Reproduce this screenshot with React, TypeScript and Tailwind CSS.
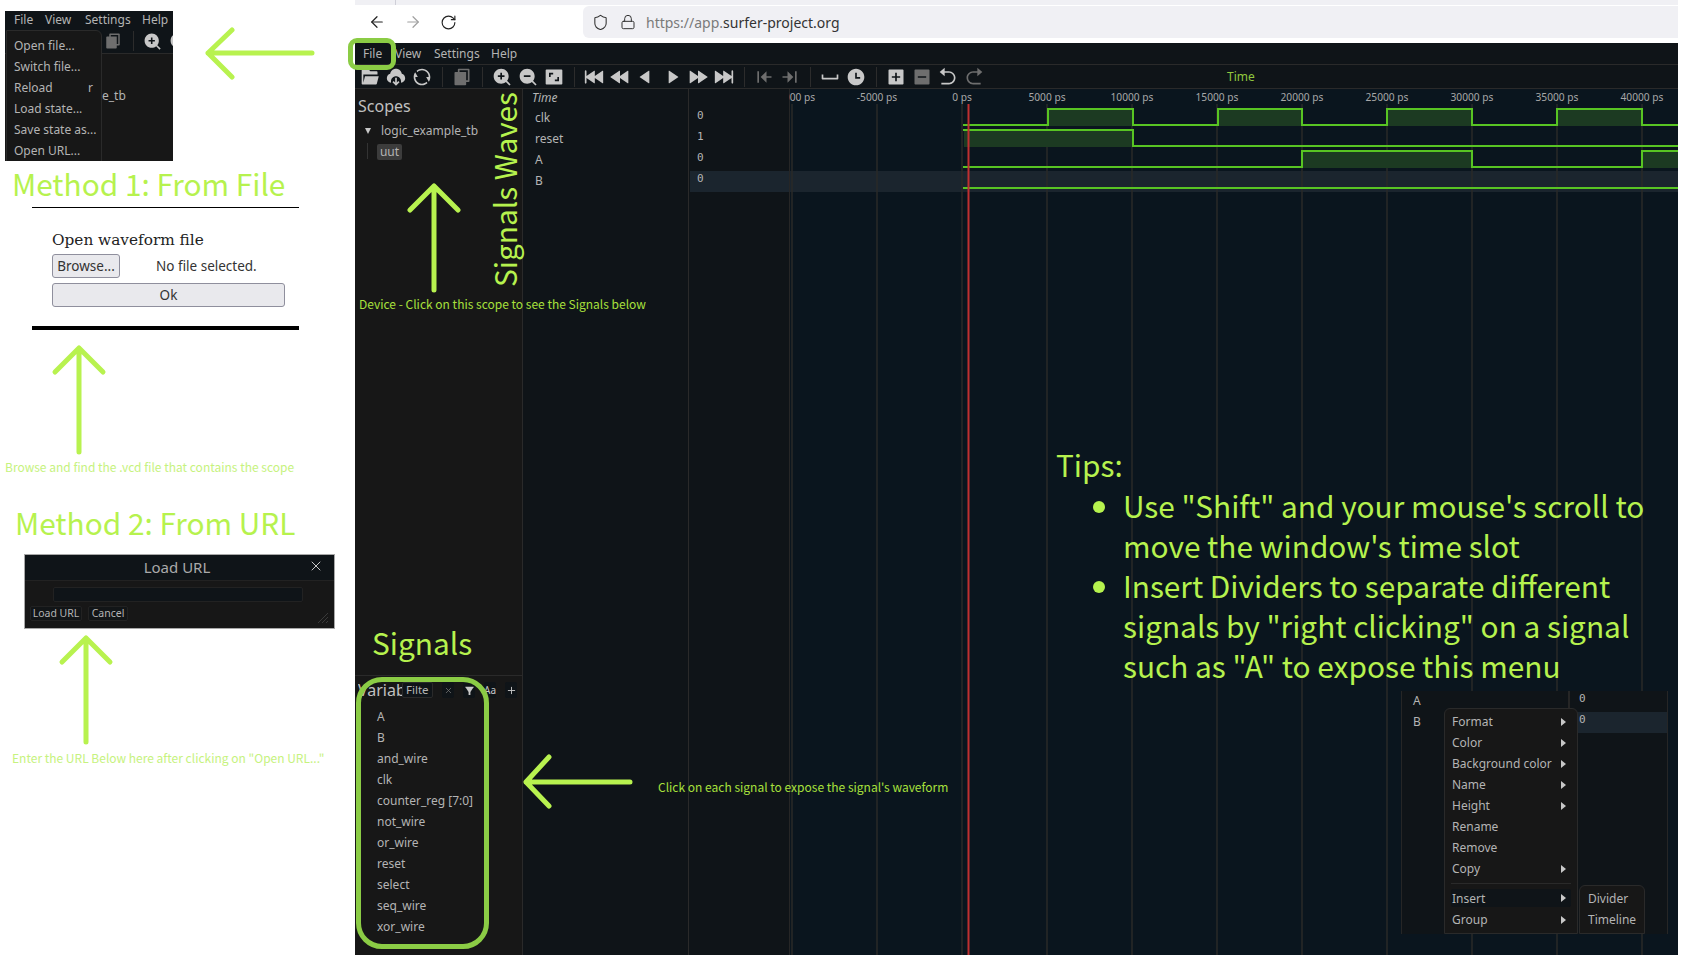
import React from 'react';
import { ArrowLeft, ArrowRight, RotateCw, Shield, Lock, X, Plus } from 'lucide-react';
import {
  RiFolderOpenFill, RiDownloadCloud2Fill, RiRefreshLine, RiFileCopyFill, RiZoomInFill, RiZoomOutFill,
  RiAspectRatioFill, RiRewindStartFill, RiRewindFill, RiPlayReverseFill, RiPlayFill, RiSpeedFill,
  RiForwardEndFill, RiContractLeftFill, RiContractRightFill, RiSpace, RiTimeFill, RiAddBoxFill,
  RiCheckboxIndeterminateFill, RiArrowGoBackFill, RiArrowGoForwardFill, RiFilterFill,
} from 'react-icons/ri';

const UI = "font-['Noto_Sans',sans-serif]";
const NOTE = "font-['Noto_Sans_CJK_SC','Noto_Sans',sans-serif]";

const fileItems = ['Open file...', 'Switch file...', 'Reload', 'Load state...', 'Save state as...', 'Open URL...'];
const menuNames = [
  { name: 'File', w: 'w-[32px]' },
  { name: 'View', w: 'w-[39px]' },
  { name: 'Settings', w: 'w-[57px]' },
  { name: 'Help', w: 'w-[30px]' },
];
const variables = ['A', 'B', 'and_wire', 'clk', 'counter_reg [7:0]', 'not_wire', 'or_wire', 'reset', 'select', 'seq_wire', 'xor_wire'];
const contextItems = [
  { label: 'Format', sub: true },
  { label: 'Color', sub: true },
  { label: 'Background color', sub: true },
  { label: 'Name', sub: true },
  { label: 'Height', sub: true },
  { label: 'Rename', sub: false },
  { label: 'Remove', sub: false },
  { label: 'Copy', sub: true },
];

const gridX = [792, 877, 962, 1047, 1132, 1217, 1302, 1387, 1472, 1557, 1642];
const gridLabels = ['-10000 ps', '-5000 ps', '0 ps', '5000 ps', '10000 ps', '15000 ps', '20000 ps', '25000 ps', '30000 ps', '35000 ps', '40000 ps'];

const WavePanel = () => {
  const clkHigh = [[1048, 1133], [1218, 1302], [1387, 1472], [1557, 1642]];
  const aHigh = [[1302, 1472], [1642, 1678]];
  return (
    <svg viewBox="789 89 889 866" className="w-[889px] h-[866px] block bg-[#0a151e]">
      <rect x="790" y="171" width="888" height="21" fill="#1b252e" />
      <line x1="789.5" y1="89" x2="789.5" y2="955" stroke="#262626" />
      {gridX.map((x, i) => (
        <g key={x}>
          <line x1={x} y1="104" x2={x} y2="955" stroke="#2a2a28" strokeWidth="1.5" />
          <text x={x} y="101" textAnchor="middle" fontSize="10.2" fill="#a8a8a8" fontFamily="Noto Sans, sans-serif">{gridLabels[i]}</text>
        </g>
      ))}
      {clkHigh.map(([a, b]) => <rect key={a} x={a} y="109" width={b - a} height="17" fill="#1c3a22" />)}
      <rect x="964" y="130" width="169" height="17" fill="#1c3a22" />
      {aHigh.map(([a, b]) => <rect key={a} x={a} y="151" width={b - a} height="17" fill="#1c3a22" />)}
      <g fill="none" stroke="#58c423" strokeWidth="2">
        <path d="M963 125H1048V109H1133V125H1218V109H1302V125H1387V109H1472V125H1557V109H1642V125H1678" />
        <path d="M963 130H1133V146H1678" />
        <path d="M963 167H1302V151H1472V167H1642V151H1678" />
        <path d="M963 188H1678" />
      </g>
      <line x1="968.5" y1="104" x2="968.5" y2="955" stroke="#c03030" strokeWidth="2" />
    </svg>
  );
};

const Toolbar = () => {
  const on = 'text-[#c8c8c8]';
  const off = 'text-[#6e6e6e]';
  const Sep = () => <div className="w-px h-[20px] bg-[#2c2c2c] ml-[7px] mr-[6px]" />;
  const Btn = ({ icon: Icon, cls = on }: { icon: React.ComponentType<{ size?: number }>; cls?: string }) => (
    <div className={`w-[26px] flex justify-center ${cls}`}><Icon size={20} /></div>
  );
  return (
    <div className="h-[24px] shrink-0 flex items-center pl-[2px] border-b border-[#2a2a2a] relative">
      <Btn icon={RiFolderOpenFill} /><Btn icon={RiDownloadCloud2Fill} /><Btn icon={RiRefreshLine} />
      <Sep />
      <Btn icon={RiFileCopyFill} cls={off} />
      <Sep />
      <Btn icon={RiZoomInFill} /><Btn icon={RiZoomOutFill} /><Btn icon={RiAspectRatioFill} />
      <Sep />
      <Btn icon={RiRewindStartFill} /><Btn icon={RiRewindFill} /><Btn icon={RiPlayReverseFill} />
      <Btn icon={RiPlayFill} /><Btn icon={RiSpeedFill} /><Btn icon={RiForwardEndFill} />
      <Sep />
      <Btn icon={RiContractLeftFill} cls={off} /><Btn icon={RiContractRightFill} cls={off} />
      <Sep />
      <Btn icon={RiSpace} /><Btn icon={RiTimeFill} />
      <Sep />
      <Btn icon={RiAddBoxFill} /><Btn icon={RiCheckboxIndeterminateFill} cls={off} />
      <Btn icon={RiArrowGoBackFill} /><Btn icon={RiArrowGoForwardFill} cls={off} />
      <span className="ml-[240px] text-[12px] text-[#8fc73e]">Time</span>
    </div>
  );
};

const SmallBtn = ({ children }: { children: React.ReactNode }) => (
  <div className="w-[12px] h-[16px] bg-[#0f1418] rounded-[2px] flex items-center justify-center text-[#c8c8c8]">{children}</div>
);

const ContextOverlay = () => (
  <div className="absolute left-[1401px] top-[691px] w-[267px] h-[243px] bg-[#0f1418] border-x border-[#262626] text-[12px] text-[#b4b4b4] overflow-hidden">
    <div className="flex h-full">
      <div className="w-[166px] pl-[11px] leading-[19px]">
        <div className="h-[21px]">A</div>
        <div className="h-[21px]">B</div>
      </div>
      <div className="flex-1 border-l-2 border-[#262626] font-['DejaVu_Sans_Mono',monospace] text-[11px] leading-[16px]">
        <div className="pl-[9px] h-[21px]">0</div>
        <div className="pl-[9px] h-[21px] bg-[#1b252e]">0</div>
      </div>
    </div>
    <div className="absolute left-[42px] top-[17px] w-[134px] h-[226px] bg-[#171717] border border-[#2a2a2a] rounded-t-[6px] px-[6px] pt-[2px] leading-[21px]">
      {contextItems.map(item => (
        <div key={item.label} className="flex items-center justify-between pl-[1px] pr-[5px]">
          <span>{item.label}</span>
          {item.sub && <span className="w-0 h-0 border-y-[4px] border-y-transparent border-l-[5px] border-l-[#c8c8c8]" />}
        </div>
      ))}
      <div className="h-px bg-[#2a2a2a] mt-[4px] mb-[5px]" />
      <div className="flex items-center justify-between pl-[1px] pr-[5px] bg-[#0f1418] rounded-[2px] h-[18px] mb-[2px]">
        <span>Insert</span>
        <span className="w-0 h-0 border-y-[4px] border-y-transparent border-l-[5px] border-l-[#c8c8c8]" />
      </div>
      <div className="flex items-center justify-between pl-[1px] pr-[5px]">
        <span>Group</span>
        <span className="w-0 h-0 border-y-[4px] border-y-transparent border-l-[5px] border-l-[#c8c8c8]" />
      </div>
    </div>
    <div className="absolute left-[177px] top-[194px] w-[66px] h-[49px] bg-[#171717] border border-[#2a2a2a] rounded-t-[6px] pl-[8px] pt-[2px] leading-[21px]">
      <div>Divider</div>
      <div>Timeline</div>
    </div>
  </div>
);

const App: React.FC = () => {
  return (
    <div className="relative w-[1700px] h-[960px] overflow-hidden bg-white flex">
      {/* Left column: the two ways to open a file */}
      <div className="w-[355px] shrink-0 pt-[11px]">
        <div className={`relative ml-[5px] w-[168px] h-[150px] bg-[#171717] overflow-hidden text-[12px] text-[#b4b4b4] ${UI}`}>
          <div className="h-[18px] bg-[#0f1418] flex items-center pl-[9px] pb-[1px] leading-none">
            <span className="w-[31px]">File</span><span className="w-[40px]">View</span><span className="w-[57px]">Settings</span><span>Help</span>
          </div>
          <div className="h-[25px] bg-[#0f1418] border-b border-[#2a2a2a] relative text-[#c8c8c8]">
            <RiFileCopyFill size={18} className="absolute left-[99px] top-[3px] text-[#6e6e6e]" />
            <div className="absolute left-[128px] top-[2px] w-px h-[20px] bg-[#2c2c2c]" />
            <RiZoomInFill size={19} className="absolute left-[138px] top-[3px]" />
            <RiZoomOutFill size={19} className="absolute left-[164px] top-[3px]" />
          </div>
          <span className="absolute left-[97px] top-[76px]">e_tb</span>
          <div className="absolute left-[1px] top-[19px] w-[96px] h-[132px] bg-[#171717] border border-[#2a2a2a] rounded-tr-[6px] pl-[7px] pt-[4px] leading-[21px]">
            {fileItems.map(item => (
              <div key={item} className="flex justify-between pr-[8px] whitespace-nowrap">
                <span>{item}</span>
                {item === 'Reload' && <span>r</span>}
              </div>
            ))}
          </div>
        </div>

        <div className={`mt-[2px] ml-[12px] text-[29.8px] leading-[40px] text-[#b6f24e] ${NOTE}`}>Method 1: From File</div>

        <div className="mt-[4px] ml-[32px] w-[267px] h-[123px] border-t border-b-[4px] border-black pl-[20px] pt-[22px]">
          <div className="font-['DejaVu_Serif',serif] text-[15.3px] leading-[20px] text-[#222]">Open waveform file</div>
          <div className={`mt-[4px] flex items-center text-[13.5px] text-[#333] ${UI}`}>
            <div className="w-[68px] h-[24px] bg-[#e9e9ed] border border-[#8f8f9d] rounded-[3px] flex items-center justify-center">Browse...</div>
            <span className="ml-[36px]">No file selected.</span>
          </div>
          <div className={`mt-[5px] w-[233px] h-[24px] bg-[#e9e9ed] border border-[#8f8f9d] rounded-[3px] flex items-center justify-center text-[13.5px] text-[#333] ${UI}`}>Ok</div>
        </div>

        <div className={`mt-[129px] ml-[5px] text-[12px] leading-[16px] whitespace-nowrap text-[#c6f27e] ${NOTE}`}>Browse and find the .vcd file that contains the scope</div>

        <div className={`mt-[27px] ml-[15px] text-[29.8px] leading-[40px] text-[#b6f24e] ${NOTE}`}>Method 2: From URL</div>

        <div className={`mt-[12px] ml-[24px] w-[311px] h-[75px] relative bg-[#171717] border border-[#a8a8a8] flex flex-col ${UI}`}>
          <div className="h-[26px] bg-[#0f1418] border-b border-[#222] flex items-center justify-center text-[15px] text-[#aaa] pr-[5px]">Load URL</div>
          <X size={16} className="absolute right-[10px] top-[3px] text-[#c8c8c8]" strokeWidth={1.5} />
          <div className="mt-[6px] ml-[28px] w-[250px] h-[15px] bg-[#0f1418] border border-[#222] rounded-[2px]" />
          <div className="mt-[4px] ml-[5px] flex gap-[6px] text-[10.5px] text-[#b4b4b4]">
            <div className="w-[52px] h-[15px] bg-[#0f1418]/60 border border-[#222] rounded-[2px] flex items-center justify-center">Load URL</div>
            <div className="w-[40px] h-[15px] bg-[#0f1418]/60 border border-[#222] rounded-[2px] flex items-center justify-center">Cancel</div>
          </div>
          <svg viewBox="0 0 12 12" className="absolute right-[5px] bottom-[4px] w-[12px] h-[12px]" stroke="#3a3a3a" fill="none">
            <path d="M1 11L11 1M5 11L11 5M9 11L11 9" />
          </svg>
        </div>

        <div className={`mt-[121px] ml-[12px] text-[12px] leading-[16px] whitespace-nowrap text-[#c6f27e] ${NOTE}`}>Enter the URL Below here after clicking on "Open URL..."</div>
      </div>

      {/* Browser window */}
      <div className="w-[1323px] shrink-0 flex flex-col h-[955px]">
        <div className="h-[5px] bg-[#f0f0f4] flex">
          <div className="ml-[40px] w-px bg-[#cfcfd8]" />
        </div>
        <div className="h-[38px] shrink-0 flex items-center bg-white pb-[4px]">
          <ArrowLeft size={18} className="ml-[13px] text-[#222]" strokeWidth={1.6} />
          <ArrowRight size={18} className="ml-[18px] text-[#a0a0a0]" strokeWidth={1.6} />
          <RotateCw size={17} className="ml-[18px] text-[#222]" strokeWidth={1.6} />
          <div className={`ml-[126px] flex-1 h-[32px] bg-[#f0f0f4] rounded-l-[6px] flex items-center text-[14px] ${UI}`}>
            <Shield size={17} className="ml-[9px] text-[#333]" strokeWidth={1.5} />
            <Lock size={16} className="ml-[11px] text-[#333]" strokeWidth={1.5} />
            <span className="ml-[10px] text-[#7a7a7a]">https://app.</span>
            <span className="text-[#333]">surfer-project.org</span>
          </div>
        </div>

        <div className={`flex-1 min-h-0 flex flex-col bg-[#0f1418] text-[#b4b4b4] text-[12px] ${UI}`}>
          <div className="h-[22px] shrink-0 flex items-center pl-[8px] border-b border-[#2a2a2a]">
            {menuNames.map(m => (
              <span key={m.name} className={m.w}>{m.name}</span>
            ))}
          </div>
          <Toolbar />
          <div className="flex-1 min-h-0 flex">
            {/* Scopes and variables */}
            <div className="w-[168px] shrink-0 bg-[#171717] border-r border-[#2a2a2a] flex flex-col">
              <div className="h-[587px] border-b border-[#2a2a2a] pl-[3px] pt-[6px] relative">
                <div className="text-[16px] leading-[22px] text-[#c0c0c0]">Scopes</div>
                <div className="mt-[3px] flex items-center leading-[21px]">
                  <span className="ml-[7px] w-0 h-0 border-x-[3.5px] border-x-transparent border-t-[6px] border-t-[#c8c8c8]" />
                  <span className="ml-[10px]">logic_example_tb</span>
                </div>
                <div className="absolute left-[12px] top-[54px] w-px h-[16px] bg-[#333]" />
                <div className="ml-[19px] mt-[3px] w-[25px] h-[16px] bg-[#3c3c3c] rounded-[2px] flex items-center justify-center leading-none">uut</div>
              </div>
              <div className="flex items-center h-[28px] pl-[3px] overflow-hidden">
                <span className="w-[44px] shrink-0 overflow-hidden whitespace-nowrap text-[16px] text-[#c0c0c0]">Variables</span>
                <div className="w-[31px] h-[16px] bg-[#0f1418] border border-[#2a2a2a] rounded-[2px] text-[11.5px] leading-[14px] pl-[3px] overflow-hidden">Filte</div>
                <div className="ml-[9px] flex gap-[9px]">
                  <SmallBtn><X size={9} className="text-[#777]" /></SmallBtn>
                  <SmallBtn><RiFilterFill size={11} /></SmallBtn>
                  <SmallBtn><span className="text-[10px] leading-none">Aa</span></SmallBtn>
                  <SmallBtn><Plus size={11} /></SmallBtn>
                </div>
              </div>
              <div className="pl-[22px] pt-[2px] leading-[21px] whitespace-nowrap">
                {variables.map(v => <div key={v}>{v}</div>)}
              </div>
            </div>

            {/* Displayed signal names */}
            <div className="w-[166px] shrink-0 border-r border-[#2a2a2a] pl-[9px]">
              <div className="italic leading-[18px]">Time</div>
              <div className="leading-[21px] pl-[3px]">clk</div>
              <div className="leading-[21px] pl-[3px]">reset</div>
              <div className="leading-[21px] pl-[3px]">A</div>
              <div className="leading-[21px] pl-[3px]">B</div>
            </div>

            {/* Values */}
            <div className="w-[100px] shrink-0 pt-[19px] font-['DejaVu_Sans_Mono',monospace] text-[11px] leading-[16px]">
              <div className="pl-[8px] h-[21px]">0</div>
              <div className="pl-[8px] h-[21px]">1</div>
              <div className="pl-[8px] h-[21px]">0</div>
              <div className="pl-[7px] ml-[1px] h-[21px] bg-[#1b252e]">0</div>
            </div>

            <WavePanel />
          </div>
        </div>
      </div>

      {/* Annotations drawn over the screenshots */}
      <svg viewBox="0 0 1700 960" className="absolute inset-0 w-[1700px] h-[960px] pointer-events-none" fill="none" stroke="#b8f24f" strokeWidth="5" strokeLinecap="round" strokeLinejoin="round">
        <path d="M312 53H208M232 30L208 53L232 77" />
        <path d="M79 452V348M55 372L79 348L103 372" />
        <path d="M86 742V638M62 662L86 638L110 662" />
        <path d="M434 290V186M410 210L434 186L458 210" />
        <path d="M630 782H526M549 757L526 782L549 806" />
      </svg>
      <div className="absolute left-[348px] top-[38px] w-[48px] h-[32px] rounded-[9px] border-[5px] border-[#8bcc45]" />
      <div className="absolute left-[356px] top-[677px] w-[133px] h-[272px] rounded-[26px] border-[5px] border-[#8bcc45]" />

      <div className={`absolute left-[487px] top-[92px] h-[195px] [writing-mode:vertical-rl] rotate-180 text-[29.8px] leading-[34px] whitespace-nowrap text-[#b6f24e] ${NOTE}`}>Signals Waves</div>
      <div className={`absolute left-[359px] top-[296px] text-[12px] leading-[16px] whitespace-nowrap text-[#a8e03c] ${NOTE}`}>Device - Click on this scope to see the Signals below</div>
      <div className={`absolute left-[372px] top-[622px] text-[29.8px] leading-[40px] text-[#b6f24e] ${NOTE}`}>Signals</div>
      <div className={`absolute left-[658px] top-[779px] text-[12px] leading-[16px] whitespace-nowrap text-[#a8e03c] ${NOTE}`}>Click on each signal to expose the signal's waveform</div>

      <div className={`absolute left-[1056px] top-[444px] w-[620px] text-[29.8px] leading-[40px] text-[#b6f24e] ${NOTE}`}>
        <div>Tips:</div>
        <ul className="list-disc pl-[67px] mt-[1px] whitespace-nowrap">
          <li>Use "Shift" and your mouse's scroll to<br />move the window's time slot</li>
          <li>Insert Dividers to separate different<br />signals by "right clicking" on a signal<br />such as "A" to expose this menu</li>
        </ul>
      </div>

      <div className={UI}><ContextOverlay /></div>
    </div>
  );
};

export default App;
